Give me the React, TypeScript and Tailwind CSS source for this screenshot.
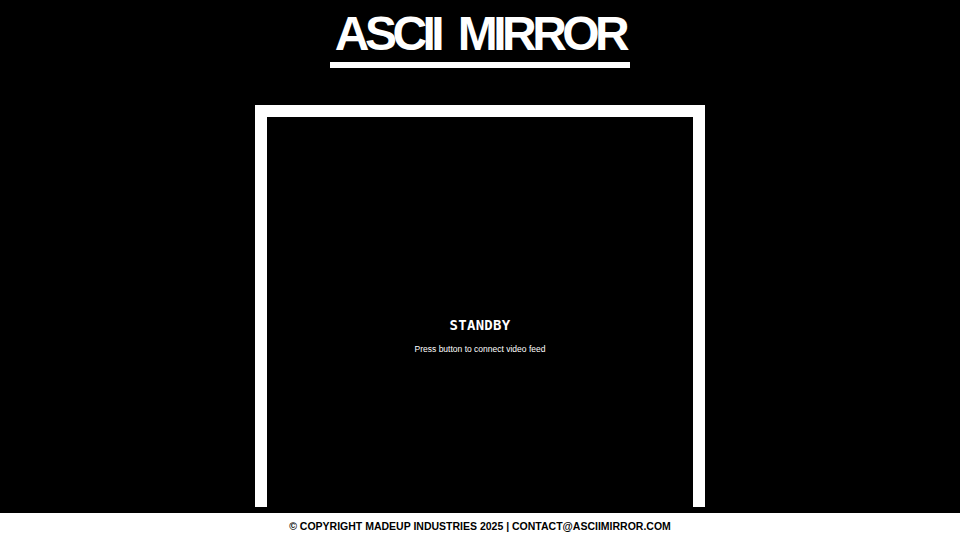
export default function App() {
  return (
    <div className="h-screen bg-black flex flex-col overflow-hidden text-white font-['Liberation_Sans',Arial,sans-serif]">
      <header className="flex flex-col items-center pt-[10px]">
        <h1 className="text-[48px] leading-none font-bold tracking-[-0.095em] [word-spacing:9px]">ASCII MIRROR</h1>
        <div className="mt-[4px] h-[6px] w-[300px] bg-white" />
      </header>

      <main className="flex-1 min-h-0 overflow-hidden flex justify-center pt-[37px] mb-[6px]">
        <div className="w-[450px] h-[450px] shrink-0 border-[12px] border-white flex flex-col items-center justify-center pt-[10px]">
          <div className="font-['DejaVu_Sans_Mono',monospace] font-bold text-[14px] leading-5 tracking-[0.02em]">
            STANDBY
          </div>
          <p className="mt-[8px] text-[8.5px] leading-3">Press button to connect video feed</p>
        </div>
      </main>

      <footer className="h-[27px] shrink-0 bg-white text-black flex items-center justify-center">
        <p className="text-[10.5px] font-bold leading-none">
          © COPYRIGHT MADEUP INDUSTRIES 2025 | CONTACT@ASCIIMIRROR.COM
        </p>
      </footer>
    </div>
  );
}
